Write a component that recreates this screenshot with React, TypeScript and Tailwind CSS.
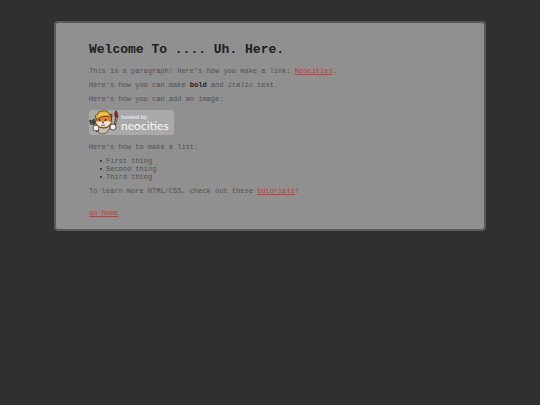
import React from "react";

const HostedBadge: React.FC = () => {
    return (
        <svg className="mt-px mb-0.5" width="85" height="25" viewBox="0 0 85 25" role="img" aria-label="Hosted by Neocities">
            <rect x="0" y="0" width="85" height="25" rx="3" fill="#a9a9a9"/>
            {/*  Body */}
            <path d="M9 18 L10 23 Q13 25 17 23 L21 18 L18 15 L11 15 Z" fill="#c5bdb0" stroke="#5a4a3e" strokeWidth="0.8"/>
            {/*  Fork */}
            <path d="M1 10 L2 14 L5 14 L5 9 M3 10 L4 14 L8 22" fill="none" stroke="#333333" strokeWidth="1.5"/>
            <path d="M3 13 L7 21" fill="none" stroke="#c4c4c4" strokeWidth="0.6"/>
            {/*  Cat */}
            <path d="M8 6 L7 10 L6 13 Q9 18 14 18 Q20 18 22 13 L23 4 L18 6 Z" fill="#e0842f" stroke="#3c2718" strokeWidth="0.8"/>
            <path d="M7 12 Q10 11 14 12 Q18 10 22 12 Q20 17 14 17 Q9 17 7 12 Z" fill="#f1e9db"/>
            <path d="M10 9 L11 11 M17 9 L16 11" stroke="#2c211c" strokeWidth="1.2"/>
            <path d="M13 12 L15 12 L14 14 Z" fill="#33221c"/>
            <path d="M12 15 Q14 16 16 15" fill="none" stroke="#5b2c22" strokeWidth="0.8"/>
            <path d="M6 8 Q6 4 9 4 Q9 1 13 1 Q19 0 20 4 L23 7 Q17 5 12 7 L8 9 Z" fill="#e3b53a" stroke="#5d4218" strokeWidth="0.8"/>
            <path d="M9 6 Q14 3 19 4" fill="none" stroke="#f5da74" strokeWidth="1"/>
            <circle cx="7" cy="18" r="3" fill="#f4f0e8" stroke="#40352e" strokeWidth="0.8"/>
            {/*  Brush */}
            <path d="M28 6 L25 18" stroke="#3b2924" strokeWidth="2.2"/>
            <path d="M28 7 L26 14" stroke="#c98a5c" strokeWidth="1"/>
            <path d="M26 7 Q25 3 27 0.5 Q29 3 29 7 Z" fill="#9c2724" stroke="#40201d" strokeWidth="0.6"/>
            <circle cx="24" cy="17" r="3" fill="#f4f0e8" stroke="#40352e" strokeWidth="0.8"/>
            <text x="32" y="9" className="font-[Lato,sans-serif] text-[6px]" fill="#f4f4f4">hosted by</text>
            <text x="32" y="20" className="font-[Lato,sans-serif] text-[12px] font-medium" fill="#f4f4f4">neocities</text>
        </svg>
    );
};

const App: React.FC = () => {
    return (
        <div className="min-h-screen bg-[#303030] pt-[21px]">
            <main className="mx-auto w-4/5 rounded-sm border-2 border-[#5a5a5a] bg-[#909090] px-[33px] pt-[19px] pb-3 font-['Liberation_Mono',monospace] text-[7px] leading-2 text-[#505050]">
                <h1 className="text-[13px] leading-4 font-bold text-[#202020]">Welcome To .... Uh. Here.</h1>

                <div className="mt-[9px] flex flex-col items-start gap-[6px]">
                    <p>
                        This is a paragraph! Here's how you make a link: <a href="#neocities" className="text-[#c83a3a] underline">Neocities</a>.
                    </p>
                    <p>
                        Here's how you can make <strong className="text-[#202020]">bold</strong> and <em>italic</em> text.
                    </p>
                    <p>Here's how you can add an image:</p>
                    <HostedBadge/>
                    <p>Here's how to make a list:</p>
                    <ul>
                        {["First thing", "Second thing", "Third thing"].map((item) => (
                            <li key={item} className="flex items-center gap-1 pl-[11px]">
                                <span className="size-0.5 rounded-full bg-[#303030]"/>
                                {item}
                            </li>
                        ))}
                    </ul>
                    <p>
                        To learn more HTML/CSS, check out these <a href="#tutorials" className="text-[#c83a3a] underline">tutorials</a>!
                    </p>
                </div>

                <a href="#home" className="mt-[14px] inline-block text-[#c83a3a] underline">go home</a>
            </main>
        </div>
    );
};

export default App;
